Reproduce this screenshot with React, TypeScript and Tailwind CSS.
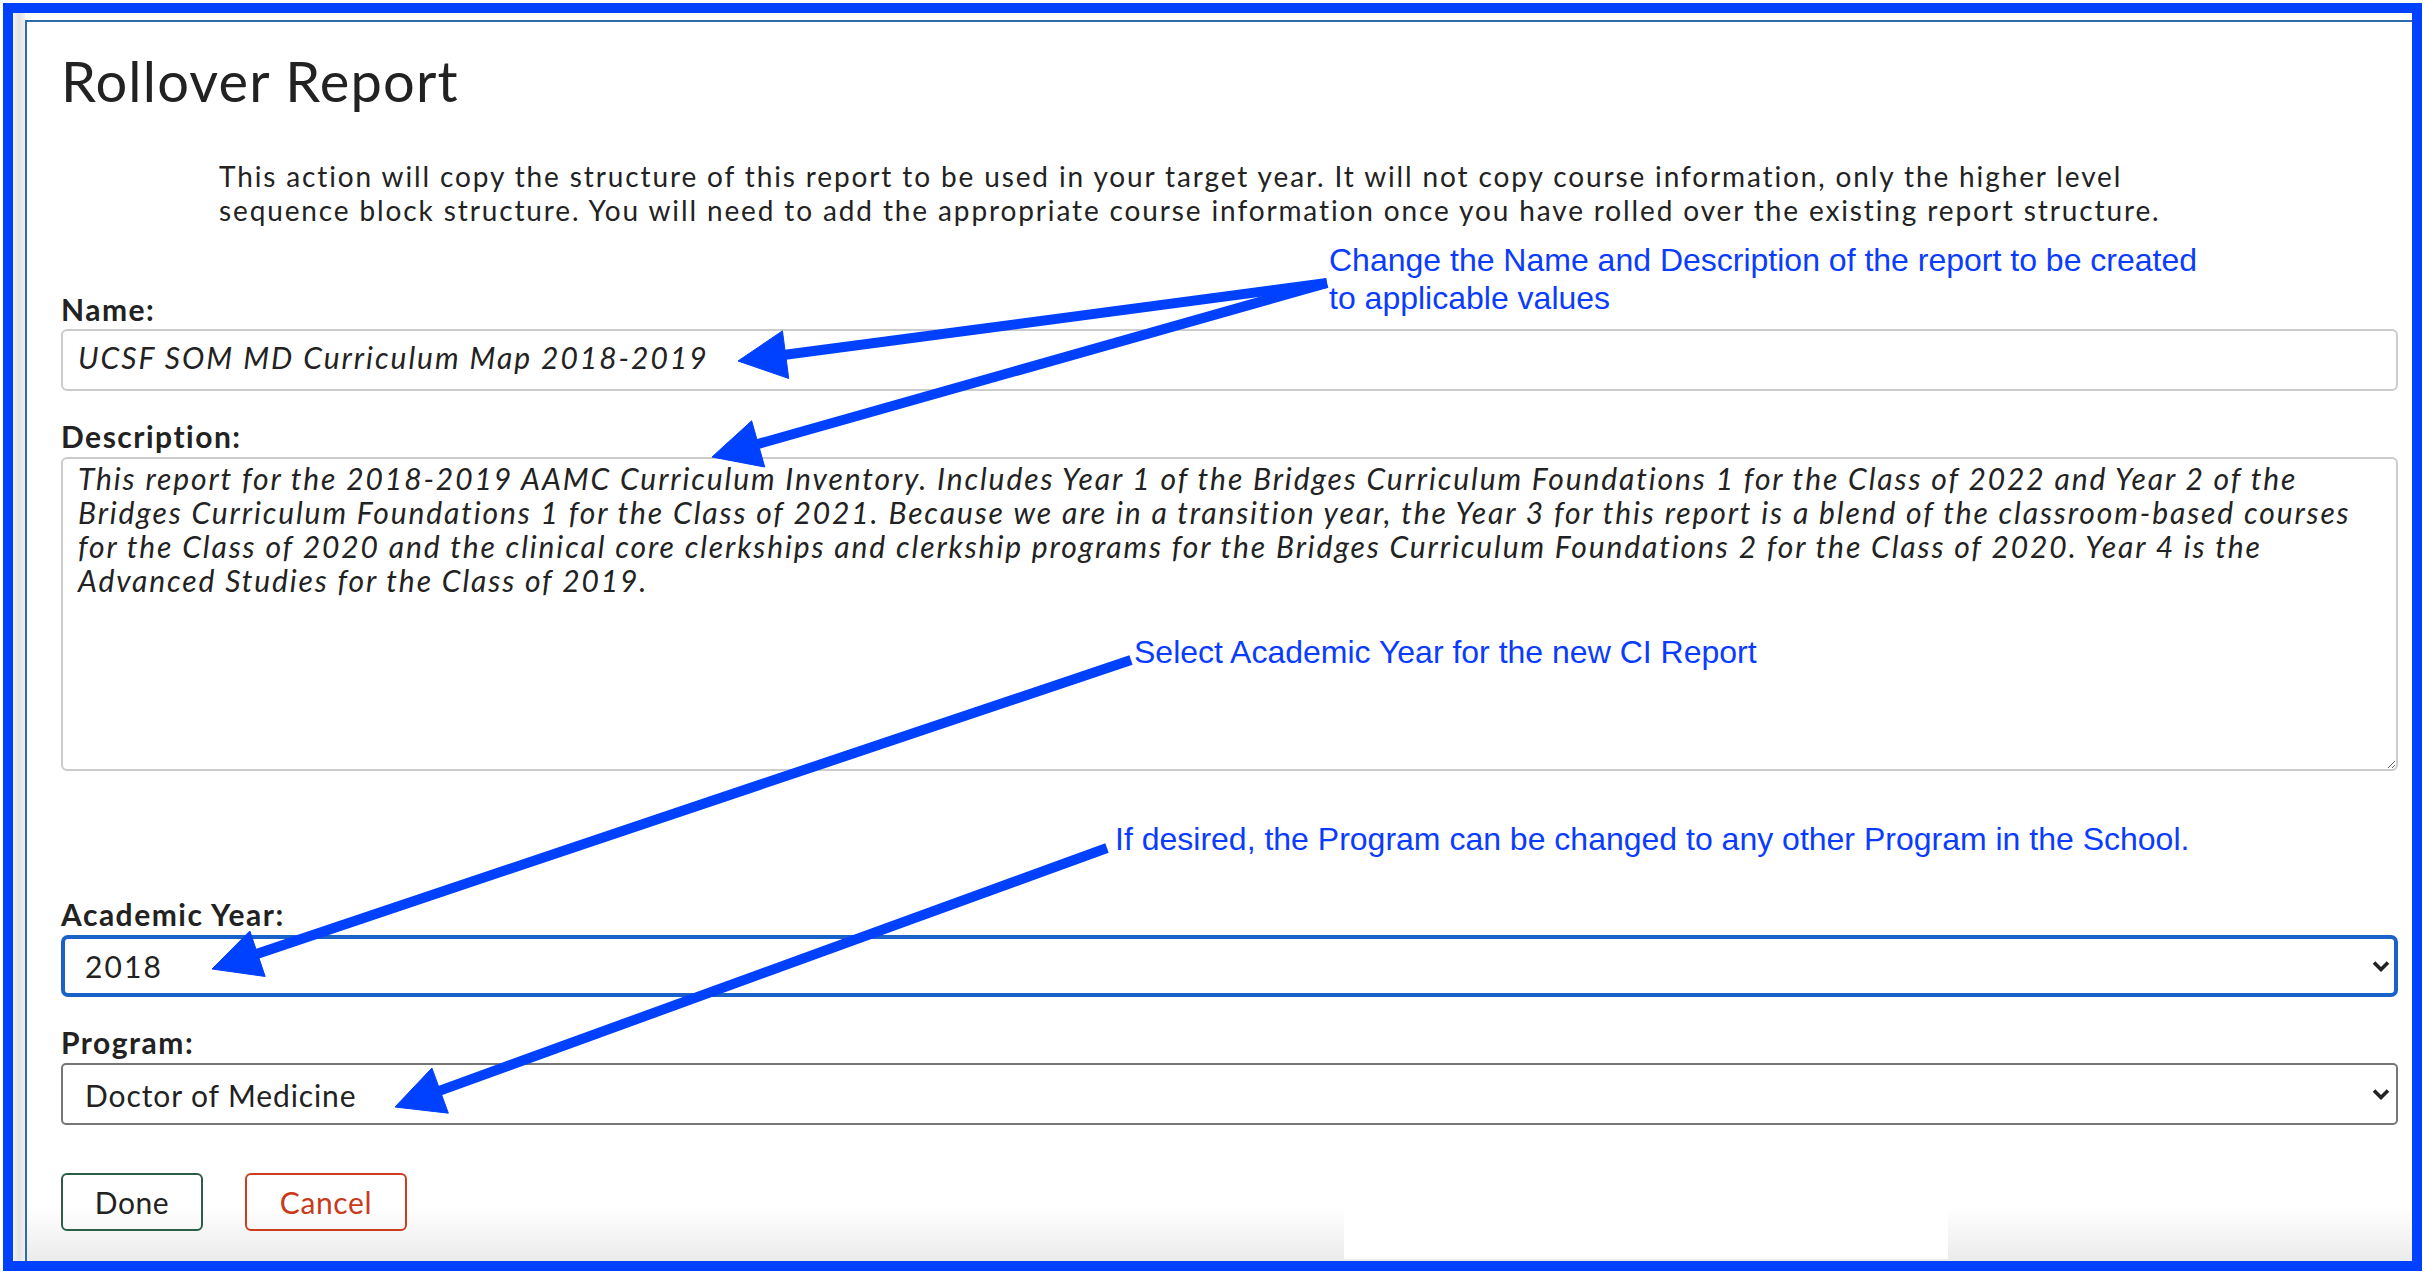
const DESCRIPTION = [
  "This report for the 2018-2019 AAMC Curriculum Inventory. Includes Year 1 of the Bridges Curriculum Foundations 1 for the Class of 2022 and Year 2 of the",
  "Bridges Curriculum Foundations 1 for the Class of 2021. Because we are in a transition year, the Year 3 for this report is a blend of the classroom-based courses",
  "for the Class of 2020 and the clinical core clerkships and clerkship programs for the Bridges Curriculum Foundations 2 for the Class of 2020. Year 4 is the",
  "Advanced Studies for the Class of 2019.",
].join("\n");

// callout arrows, page coordinates: [startX, startY, tipX, tipY]
const ARROWS: [number, number, number, number][] = [
  [1327, 283, 738, 361],
  [1327, 283, 712, 457],
  [1131, 660, 212, 969],
  [1107, 848, 395, 1107],
];

function arrowParts(sx: number, sy: number, tx: number, ty: number) {
  const len = 48;
  const half = 24;
  const dx = tx - sx;
  const dy = ty - sy;
  const d = Math.hypot(dx, dy);
  const ux = dx / d;
  const uy = dy / d;
  const bx = tx - ux * len;
  const by = ty - uy * len;
  const px = -uy;
  const py = ux;
  return {
    x2: bx + ux * 6,
    y2: by + uy * 6,
    points: `${tx},${ty} ${bx + px * half},${by + py * half} ${bx - px * half},${by - py * half}`,
  };
}

function Chevron() {
  return (
    <svg
      width="18"
      height="12"
      viewBox="0 0 18 12"
      className="pointer-events-none absolute right-[8px] top-1/2 -translate-y-1/2"
    >
      <path d="M2 2.5 L9 9.5 L16 2.5" fill="none" stroke="#222" strokeWidth="3.6" />
    </svg>
  );
}

function Label({ children }: { children: string }) {
  return (
    <label className="block text-[30px] leading-[34px] font-bold tracking-[0.05em] text-[#222]">{children}</label>
  );
}

export default function App() {
  return (
    <div className="relative w-[2424px] h-[1274px] overflow-hidden bg-white pl-[3px] pt-[3px] font-['Lato',sans-serif] text-[#222]">
      <div className="flex w-[2419px] h-[1268px] border-[10px] border-[#0040ff]">
        <div className="w-[12px] shrink-0 bg-gradient-to-r from-[#f4f4f4] via-[#e2e2e2] to-[#f2f2f2]" />
        <div className="flex flex-1 flex-col pt-[7px]">
          <div className="relative flex-1 border-l-2 border-t-2 border-[#2d6ca8]">
            <div className="absolute bottom-0 left-0 right-0 h-[54px] bg-gradient-to-b from-white to-[#ebebeb]" />
            <div className="absolute bottom-[2px] left-[1317px] w-[604px] h-[58px] bg-white" />

            <div className="relative flex flex-col pl-[34px] pr-[14px]">
              <h1 className="mt-[27px] text-[56px] leading-[64px] font-normal tracking-[0.021em] text-[#222]">
                Rollover Report
              </h1>
              <p className="mt-[46px] ml-[158px] text-[28px] leading-[34px] tracking-[0.067em] text-[#222]">
                This action will copy the structure of this report to be used in your target year. It will not copy course information, only the higher level
                <br />
                sequence block structure. You will need to add the appropriate course information once you have rolled over the existing report structure.
              </p>

              <div className="mt-[65px]">
                <Label>Name:</Label>
              </div>
              <input
                className="mt-[3px] h-[62px] w-full rounded-[6px] border-2 border-[#cccccc] bg-white pl-[15px] pb-[7px] text-[30px] italic tracking-[0.066em] text-[#222] outline-none"
                defaultValue="UCSF SOM MD Curriculum Map 2018-2019"
              />

              <div className="mt-[28px]">
                <Label>Description:</Label>
              </div>
              <textarea
                className="mt-[4px] h-[314px] w-full rounded-[6px] border-2 border-[#cccccc] bg-white px-[15px] pt-[2px] text-[30px] leading-[34px] italic tracking-[0.063em] text-[#222] outline-none whitespace-pre"
                defaultValue={DESCRIPTION}
              />

              <div className="mt-[126px]">
                <Label>Academic Year:</Label>
              </div>
              <div className="relative mt-[4px]">
                <select
                  className="h-[62px] w-full appearance-none rounded-[7px] border-4 border-[#1b62c8] bg-white pl-[20px] text-[30px] tracking-[0.07em] text-[#222] outline-none"
                  defaultValue="2018"
                >
                  <option>2017</option>
                  <option>2018</option>
                  <option>2019</option>
                </select>
                <Chevron />
              </div>

              <div className="mt-[28px]">
                <Label>Program:</Label>
              </div>
              <div className="relative mt-[4px]">
                <select
                  className="h-[62px] w-full appearance-none rounded-[5px] border-2 border-[#767676] bg-white pl-[22px] pt-[2px] text-[30px] tracking-[0.03em] text-[#222] outline-none"
                  defaultValue="Doctor of Medicine"
                >
                  <option>Doctor of Medicine</option>
                </select>
                <Chevron />
              </div>

              <div className="mt-[48px] flex gap-[42px]">
                <button className="h-[58px] w-[142px] rounded-[6px] border-2 border-[#2b5e47] text-[30px] tracking-[0.02em] text-[#222]">
                  Done
                </button>
                <button className="h-[58px] w-[162px] rounded-[6px] border-2 border-[#cc3d1e] text-[30px] tracking-[0.02em] text-[#c93a1b]">
                  Cancel
                </button>
              </div>
            </div>
          </div>
        </div>
      </div>

      {/* callouts */}
      <div className="absolute left-[1329px] top-[241px] font-['Liberation_Sans',Arial,sans-serif] text-[32px] leading-[38px] text-[#0a3cff]">
        Change the Name and Description of the report to be created
        <br />
        to applicable values
      </div>
      <div className="absolute left-[1134px] top-[633px] font-['Liberation_Sans',Arial,sans-serif] text-[32px] leading-[38px] text-[#0a3cff]">
        Select Academic Year for the new CI Report
      </div>
      <div className="absolute left-[1115px] top-[820px] font-['Liberation_Sans',Arial,sans-serif] text-[32px] leading-[38px] text-[#0a3cff]">
        If desired, the Program can be changed to any other Program in the School.
      </div>

      <svg className="pointer-events-none absolute inset-0" width="2424" height="1274" viewBox="0 0 2424 1274">
        {ARROWS.map(([sx, sy, tx, ty], i) => {
          const a = arrowParts(sx, sy, tx, ty);
          return (
            <g key={i} fill="#0040ff" stroke="#0040ff">
              <line x1={sx} y1={sy} x2={a.x2} y2={a.y2} strokeWidth="10" />
              <polygon points={a.points} strokeWidth="1" />
            </g>
          );
        })}
      </svg>
    </div>
  );
}
